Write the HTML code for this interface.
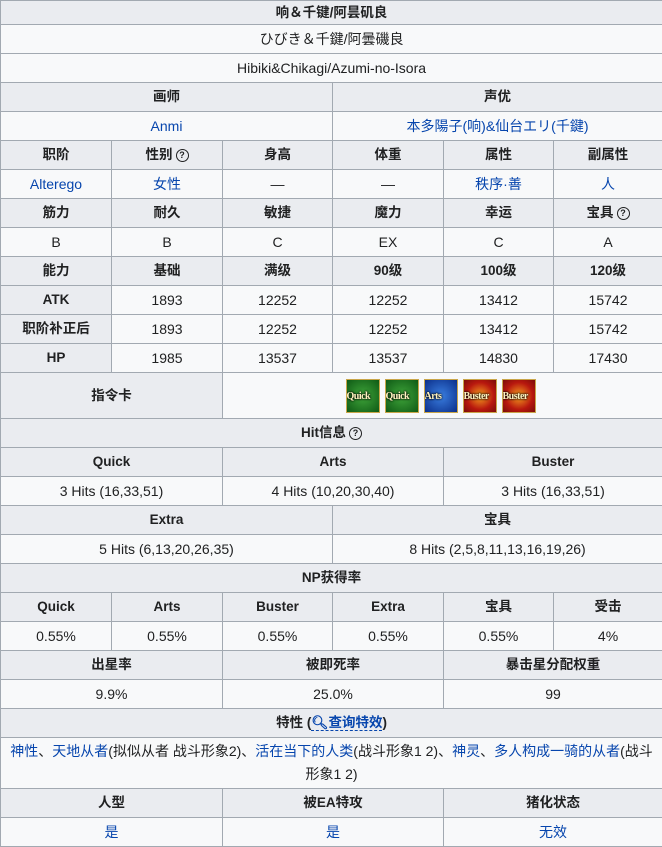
<!DOCTYPE html>
<html><head><meta charset="utf-8"><style>
*{margin:0;padding:0;box-sizing:border-box}
body{width:662px;height:846px;overflow:hidden;background:#fff;font-family:"Liberation Sans","Noto Sans CJK SC",sans-serif;font-size:14px;color:#202122}
table{border-collapse:collapse;table-layout:fixed;width:662px}
td,th{border:1px solid #a2a9b1;text-align:center;height:29px;padding:0 2px;background:#f8f9fa;font-weight:normal;line-height:18px}
th{background:#eaecf0;font-weight:bold;font-size:13.5px}
a{color:#0645ad;text-decoration:none}
.q{display:inline-block;width:13px;height:13px;border:1.5px solid #202122;border-radius:50%;font-size:9px;line-height:10px;text-align:center;font-weight:bold;vertical-align:1px;margin-left:3px}
.card{display:inline-block;width:34px;height:34px;margin:0 2.5px;vertical-align:middle;border:1px solid #c9a64a;position:relative;font:bold 10px "Liberation Serif",serif;color:#fff3c0;line-height:34px;text-shadow:0 0 2px #000,0 0 2px #000;letter-spacing:-0.5px;overflow:hidden}
.g{background:radial-gradient(circle,#3fa53a,#0f5a15)}
.b{background:radial-gradient(circle,#3a7ee0,#0b2f8a)}
.r{background:radial-gradient(circle,#f6a020,#b8180e 60%,#7a0d0a)}
</style></head><body>
<table>
<colgroup><col style="width:111px"><col style="width:111px"><col style="width:110px"><col style="width:111px"><col style="width:110px"><col style="width:109px"></colgroup>
<tr><th colspan="6" style="height:24px">响＆千键/阿昙矶良</th></tr>
<tr><td colspan="6">ひびき＆千鍵/阿曇磯良</td></tr>
<tr><td colspan="6">Hibiki&amp;Chikagi/Azumi-no-Isora</td></tr>
<tr><th colspan="3">画师</th><th colspan="3">声优</th></tr>
<tr><td colspan="3"><a>Anmi</a></td><td colspan="3"><a>本多陽子(响)&amp;仙台エリ(千鍵)</a></td></tr>
<tr><th>职阶</th><th>性别<span class="q">?</span></th><th>身高</th><th>体重</th><th>属性</th><th>副属性</th></tr>
<tr><td><a>Alterego</a></td><td><a>女性</a></td><td>—</td><td>—</td><td><a>秩序·善</a></td><td><a>人</a></td></tr>
<tr><th>筋力</th><th>耐久</th><th>敏捷</th><th>魔力</th><th>幸运</th><th>宝具<span class="q">?</span></th></tr>
<tr><td>B</td><td>B</td><td>C</td><td>EX</td><td>C</td><td>A</td></tr>
<tr><th>能力</th><th>基础</th><th>满级</th><th>90级</th><th>100级</th><th>120级</th></tr>
<tr><th>ATK</th><td>1893</td><td>12252</td><td>12252</td><td>13412</td><td>15742</td></tr>
<tr><th>职阶补正后</th><td>1893</td><td>12252</td><td>12252</td><td>13412</td><td>15742</td></tr>
<tr><th>HP</th><td>1985</td><td>13537</td><td>13537</td><td>14830</td><td>17430</td></tr>
<tr><th colspan="2" style="height:46px">指令卡</th><td colspan="4" style="height:46px;padding-left:0;text-align:left;padding-left:120px"><span class="card g">Quick</span><span class="card g">Quick</span><span class="card b">Arts</span><span class="card r">Buster</span><span class="card r">Buster</span></td></tr>
<tr><th colspan="6">Hit信息<span class="q">?</span></th></tr>
<tr><th colspan="2">Quick</th><th colspan="2">Arts</th><th colspan="2">Buster</th></tr>
<tr><td colspan="2">3 Hits (16,33,51)</td><td colspan="2">4 Hits (10,20,30,40)</td><td colspan="2">3 Hits (16,33,51)</td></tr>
<tr><th colspan="3">Extra</th><th colspan="3">宝具</th></tr>
<tr><td colspan="3">5 Hits (6,13,20,26,35)</td><td colspan="3">8 Hits (2,5,8,11,13,16,19,26)</td></tr>
<tr><th colspan="6">NP获得率</th></tr>
<tr><th>Quick</th><th>Arts</th><th>Buster</th><th>Extra</th><th>宝具</th><th>受击</th></tr>
<tr><td>0.55%</td><td>0.55%</td><td>0.55%</td><td>0.55%</td><td>0.55%</td><td>4%</td></tr>
<tr><th colspan="2">出星率</th><th colspan="2">被即死率</th><th colspan="2">暴击星分配权重</th></tr>
<tr><td colspan="2">9.9%</td><td colspan="2">25.0%</td><td colspan="2">99</td></tr>
<tr><th colspan="6">特性 (<a style="border-bottom:1px dashed #0645ad;color:#0645ad">🔍︎查询特效</a>)</th></tr>
<tr><td colspan="6" style="height:51px;line-height:23px;padding:2px 6px"><a>神性</a>、<a>天地从者</a>(拟似从者 战斗形象2)、<a>活在当下的人类</a>(战斗形象1 2)、<a>神灵</a>、<a>多人构成一骑的从者</a>(战斗形象1 2)</td></tr>
<tr><th colspan="2">人型</th><th colspan="2">被EA特攻</th><th colspan="2">猪化状态</th></tr>
<tr><td colspan="2"><a>是</a></td><td colspan="2"><a>是</a></td><td colspan="2"><a>无效</a></td></tr>
</table>
</body></html>
